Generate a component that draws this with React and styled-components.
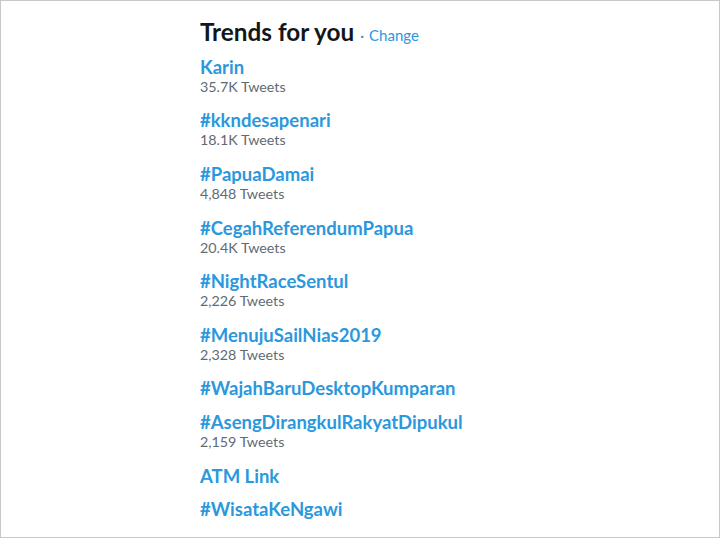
import styled, { createGlobalStyle } from "styled-components";

const GlobalStyle = createGlobalStyle`
  html, body {
    margin: 0;
    padding: 0;
    background: #fff;
  }
  body {
    font-family: Lato, "Noto Sans", sans-serif;
  }
`

const Frame = styled.div`
  box-sizing: border-box;
  width: 720px;
  height: 538px;
  border: 1px solid #c8c8c8;
  overflow: hidden;
  padding: 16px 0 0 199px;
`

const Header = styled.div`
  display: flex;
  align-items: baseline;
  gap: 6px;
  line-height: 29px;

  & h2 {
    margin: 0;
    font-size: 24.3px;
    font-weight: 700;
    color: #14171a;
  }

  & .change {
    font-size: 15px;
    color: #2b98dd;
  }

  & .dot {
    color: #657786;
    font-size: 15px;
    margin-right: -1px;
  }
`

const TrendList = styled.ul`
  list-style: none;
  margin: 0;
  padding: 0;
`

const Trend = styled.li`
  padding: 6.8px 0 6.8px;

  & .name {
    font-size: 18.5px;
    font-weight: 700;
    line-height: 20px;
    color: #2b98dd;
  }

  & .count {
    font-size: 14.3px;
    line-height: 20px;
    color: #5f6b73;
  }
`

const trends = [
  { name: "Karin", count: "35.7K Tweets" },
  { name: "#kkndesapenari", count: "18.1K Tweets" },
  { name: "#PapuaDamai", count: "4,848 Tweets" },
  { name: "#CegahReferendumPapua", count: "20.4K Tweets" },
  { name: "#NightRaceSentul", count: "2,226 Tweets" },
  { name: "#MenujuSailNias2019", count: "2,328 Tweets" },
  { name: "#WajahBaruDesktopKumparan" },
  { name: "#AsengDirangkulRakyatDipukul", count: "2,159 Tweets" },
  { name: "ATM Link" },
  { name: "#WisataKeNgawi" },
]

export default function App() {
  return (
    <>
      <GlobalStyle />
      <Frame>
        <Header>
          <h2>Trends for you</h2>
          <span className="dot">·</span>
          <span className="change">Change</span>
        </Header>
        <TrendList>
          {trends.map((t) => (
            <Trend key={t.name}>
              <div className="name">{t.name}</div>
              {t.count && <div className="count">{t.count}</div>}
            </Trend>
          ))}
        </TrendList>
      </Frame>
    </>
  )
}
